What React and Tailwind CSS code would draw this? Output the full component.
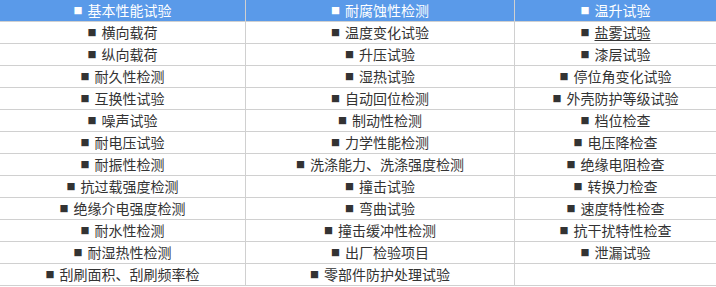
const rows = [
  ["横向载荷", "温度变化试验", "盐雾试验"],
  ["纵向载荷", "升压试验", "漆层试验"],
  ["耐久性检测", "湿热试验", "停位角变化试验"],
  ["互换性试验", "自动回位检测", "外壳防护等级试验"],
  ["噪声试验", "制动性检测", "档位检查"],
  ["耐电压试验", "力学性能检测", "电压降检查"],
  ["耐振性检测", "洗涤能力、洗涤强度检测", "绝缘电阻检查"],
  ["抗过载强度检测", "撞击试验", "转换力检查"],
  ["绝缘介电强度检测", "弯曲试验", "速度特性检查"],
  ["耐水性检测", "撞击缓冲性检测", "抗干扰特性检查"],
  ["耐湿热性检测", "出厂检验项目", "泄漏试验"],
  ["刮刷面积、刮刷频率检", "零部件防护处理试验", ""],
];

const heads = ["基本性能试验", "耐腐蚀性检测", "温升试验"];

function Cell({ text, link, last }) {
  return (
    <div
      className={`h-[22px] flex items-center justify-center border-b border-[#d0d0d0] ${
        last ? "" : "border-r"
      }`}
    >
      {text && (
        <>
          <span className="mr-[5px] text-[9px] leading-none">■</span>
          <span className={`leading-[21px] ${link ? "underline underline-offset-2" : ""}`}>
            {text}
          </span>
        </>
      )}
    </div>
  );
}

export default function App() {
  return (
    <div
      className="w-[716px] h-[287px] overflow-hidden bg-white text-[14px] text-[#333]"
      style={{ fontFamily: '"Noto Sans CJK SC", "Noto Sans", sans-serif' }}
    >
      <div className="grid grid-cols-[246px_269px_201px] bg-[#5a9ae9] text-white">
        {heads.map((h, i) => (
          <Cell key={h} text={h} last={i === 2} />
        ))}
      </div>
      <div className="grid grid-cols-[246px_269px_201px]">
        {rows.map((r, ri) =>
          r.map((c, i) => (
            <Cell key={ri + "-" + i} text={c} last={i === 2} link={ri === 0 && i === 2} />
          ))
        )}
      </div>
    </div>
  );
}
